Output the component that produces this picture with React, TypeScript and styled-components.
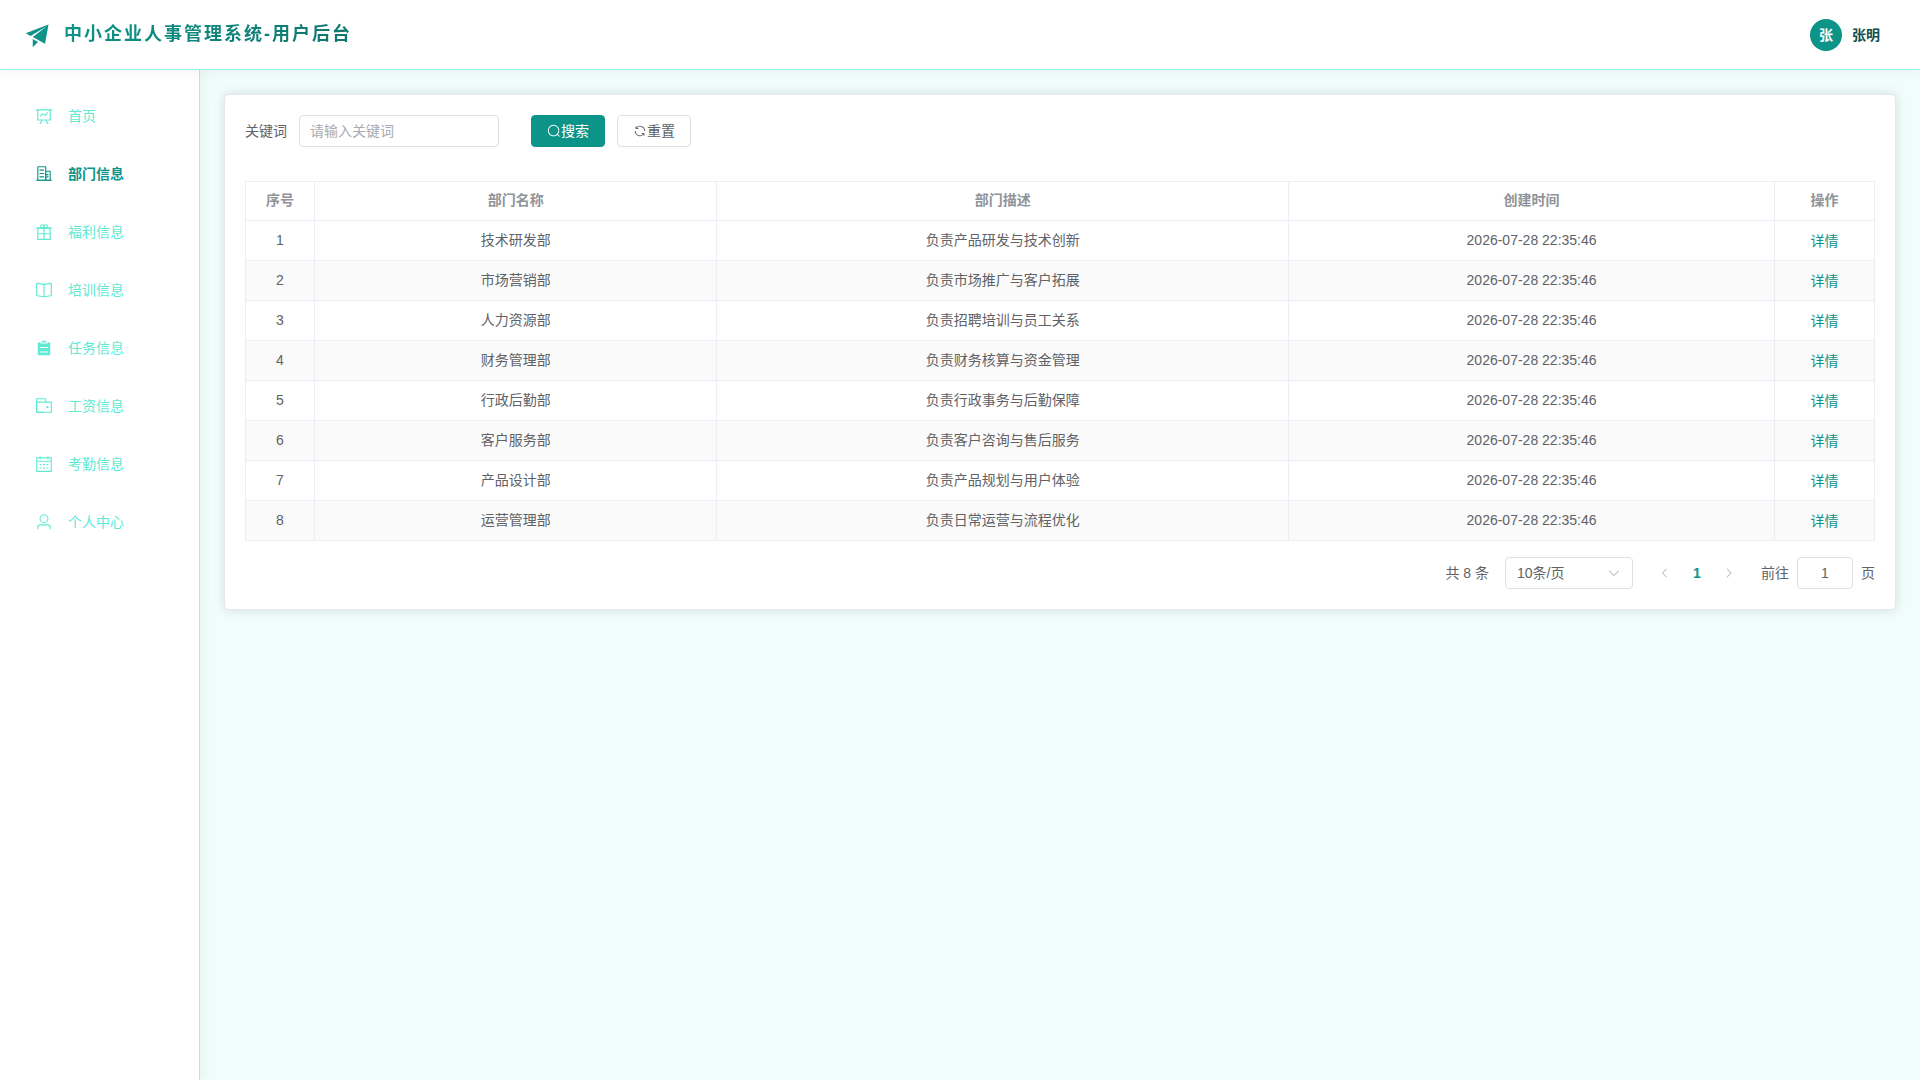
import React, { useState } from 'react';
import styled, { createGlobalStyle } from 'styled-components';

const color = {
  primary: '#0d9488',
  primaryLight: '#5eead4',
  line: '#99f6e4',
  page: '#f0fdfa',
  dark: '#134e4a',
  text: '#606266',
  muted: '#909399',
  placeholder: '#a8abb2',
  control: '#dcdfe6',
  cell: '#ebeef5',
  card: '#e4e7ed',
};

const GlobalStyle = createGlobalStyle`
  *, *::before, *::after { box-sizing: border-box; }
  body { margin: 0; background: ${color.page}; }
  body, button, input, select {
    font-family: "Liberation Sans", "Noto Sans CJK SC", sans-serif;
    font-size: 14px;
    line-height: 22px;
  }
`;

const icons: Record<string, string[]> = {
  promotion: ['m64 448 832-320-128 704-446.08-243.328L832 192 242.816 545.536zm256 512V657.024L512 768z'],
  dataLine: [
    'M359.168 768H160a32 32 0 0 1-32-32V192H64a32 32 0 0 1 0-64h896a32 32 0 1 1 0 64h-64v544a32 32 0 0 1-32 32H665.216l110.848 192h-73.856L591.36 768H433.024L322.176 960H248.32zM832 192H192v512h640zM342.656 534.656a32 32 0 1 1-45.312-45.312L444.992 341.76l125.44 94.08L679.04 300.032a32 32 0 1 1 49.92 39.936L581.632 524.224 451.008 426.24 342.656 534.592z',
  ],
  office: [
    'M192 128v704h384V128zm-32-64h448a32 32 0 0 1 32 32v768a32 32 0 0 1-32 32H160a32 32 0 0 1-32-32V96a32 32 0 0 1 32-32',
    'M256 256h256v64H256zm0 192h256v64H256zm0 192h256v64H256zm384-128h128v64H640zm0 128h128v64H640zM64 832h896v64H64z',
    'M640 384v448h192V384zm-32-64h256a32 32 0 0 1 32 32v512a32 32 0 0 1-32 32H608a32 32 0 0 1-32-32V352a32 32 0 0 1 32-32',
  ],
  present: [
    'M480 896V640H192v-64h288V320H192v576zm64 0h288V320H544v256h288v64H544zM128 256h768v672a32 32 0 0 1-32 32H160a32 32 0 0 1-32-32z',
    'M96 256h832q32 0 32 32t-32 32H96q-32 0-32-32t32-32',
    'M416 256a64 64 0 1 0 0-128 64 64 0 0 0 0 128m0 64a128 128 0 1 1 0-256 128 128 0 0 1 0 256',
    'M608 256a64 64 0 1 0 0-128 64 64 0 0 0 0 128m0 64a128 128 0 1 1 0-256 128 128 0 0 1 0 256',
  ],
  reading: [
    'm512 863.36 384-54.848v-638.72L525.568 222.72a96 96 0 0 1-27.136 0L128 169.792v638.72zM137.024 106.432l370.432 52.928a32 32 0 0 0 9.088 0l370.432-52.928A64 64 0 0 1 960 169.792v638.72a64 64 0 0 1-54.976 63.36l-388.48 55.488a32 32 0 0 1-9.088 0l-388.48-55.488A64 64 0 0 1 64 808.512v-638.72a64 64 0 0 1 73.024-63.36',
    'M480 192h64v704h-64z',
  ],
  list: ['M704 192h160v736H160V192h160v64h384zM288 512h448v-64H288zm0 256h448v-64H288zm96-576V96h256v96z'],
  wallet: [
    'M640 288h-64V128H128v704h384v32a32 32 0 0 0 32 32H96a32 32 0 0 1-32-32V96a32 32 0 0 1 32-32h512a32 32 0 0 1 32 32z',
    'M128 320v512h768V320zm-32-64h832a32 32 0 0 1 32 32v576a32 32 0 0 1-32 32H96a32 32 0 0 1-32-32V288a32 32 0 0 1 32-32',
    'M704 640a64 64 0 1 1 0-128 64 64 0 0 1 0 128',
  ],
  calendar: [
    'M128 384v512h768V192H768v32a32 32 0 1 1-64 0v-32H320v32a32 32 0 0 1-64 0v-32H128v128h768v64zm192-256h384V96a32 32 0 1 1 64 0v32h160a32 32 0 0 1 32 32v768a32 32 0 0 1-32 32H96a32 32 0 0 1-32-32V160a32 32 0 0 1 32-32h160V96a32 32 0 0 1 64 0zm-32 384h64a32 32 0 0 1 0 64h-64a32 32 0 0 1 0-64m0 192h64a32 32 0 1 1 0 64h-64a32 32 0 1 1 0-64m192-192h64a32 32 0 0 1 0 64h-64a32 32 0 0 1 0-64m0 192h64a32 32 0 1 1 0 64h-64a32 32 0 1 1 0-64m192-192h64a32 32 0 1 1 0 64h-64a32 32 0 1 1 0-64m0 192h64a32 32 0 1 1 0 64h-64a32 32 0 1 1 0-64',
  ],
  user: [
    'M512 512a192 192 0 1 0 0-384 192 192 0 0 0 0 384m0 64a256 256 0 1 1 0-512 256 256 0 0 1 0 512m320 320v-96a96 96 0 0 0-96-96H288a96 96 0 0 0-96 96v96a32 32 0 1 1-64 0v-96a160 160 0 0 1 160-160h448a160 160 0 0 1 160 160v96a32 32 0 1 1-64 0',
  ],
  search: [
    'm795.904 750.72 124.992 124.928a32 32 0 0 1-45.248 45.248L750.656 795.904a416 416 0 1 1 45.248-45.248zM480 832a352 352 0 1 0 0-704 352 352 0 0 0 0 704',
  ],
  refresh: [
    'M771.776 794.88A384 384 0 0 1 128 512h64a320 320 0 0 0 555.712 216.448H654.72a32 32 0 1 1 0-64h149.056a32 32 0 0 1 32 32v148.928a32 32 0 1 1-64 0v-50.56zM276.288 295.616h92.992a32 32 0 0 1 0 64H220.16a32 32 0 0 1-32-32V178.56a32 32 0 0 1 64 0v50.56A384 384 0 0 1 896.128 512h-64a320 320 0 0 0-555.776-216.384z',
  ],
  down: [
    'M831.872 340.864 512 652.672 192.128 340.864a30.59 30.59 0 0 0-42.752 0 29.12 29.12 0 0 0 0 41.6L489.664 714.24a32 32 0 0 0 44.672 0l340.288-331.712a29.12 29.12 0 0 0 0-41.728 30.59 30.59 0 0 0-42.752 0z',
  ],
  left: [
    'M609.408 149.376 277.76 489.6a32 32 0 0 0 0 44.672l331.648 340.352a29.12 29.12 0 0 0 41.728 0 30.59 30.59 0 0 0 0-42.752L339.264 511.936l311.872-319.872a30.59 30.59 0 0 0 0-42.688 29.12 29.12 0 0 0-41.728 0',
  ],
  right: [
    'M340.864 149.312a30.59 30.59 0 0 0 0 42.752L652.736 512 340.864 831.872a30.59 30.59 0 0 0 0 42.752 29.12 29.12 0 0 0 41.728 0L714.24 534.336a32 32 0 0 0 0-44.672L382.592 149.376a29.12 29.12 0 0 0-41.728 0z',
  ],
};

const Svg = styled.svg<{ $size: number }>`
  display: block;
  flex: none;
  width: ${(p) => p.$size}px;
  height: ${(p) => p.$size}px;
  fill: currentColor;
`;

const Icon = ({ name, size }: { name: string; size: number }) => (
  <Svg $size={size} viewBox="0 0 1024 1024" aria-hidden="true">
    {icons[name].map((d, i) => (
      <path key={i} d={d} />
    ))}
  </Svg>
);

const Page = styled.div`
  display: flex;
  flex-direction: column;
  min-height: 100vh;
  color: ${color.text};
`;

const Header = styled.header`
  position: relative;
  z-index: 1;
  display: flex;
  align-items: center;
  justify-content: space-between;
  height: 70px;
  padding: 0 40px 0 24px;
  background: #fff;
  border-bottom: 1px solid ${color.line};
  box-shadow: 0 2px 12px rgba(0, 0, 0, 0.05);
`;

const Brand = styled.div`
  display: flex;
  align-items: center;
  gap: 12px;
  color: ${color.primary};
`;

const Title = styled.h1`
  margin: 0;
  font-size: 18px;
  font-weight: 600;
  line-height: 25px;
  letter-spacing: 2px;
  background: linear-gradient(135deg, #0d9488, #0f766e);
  background-clip: text;
  -webkit-background-clip: text;
  color: transparent;
`;

const Account = styled.div`
  display: flex;
  align-items: center;
  gap: 10px;
  font-weight: 600;
  color: ${color.dark};
`;

const Avatar = styled.span`
  display: grid;
  place-items: center;
  width: 32px;
  height: 32px;
  border-radius: 50%;
  background: ${color.primary};
  color: #fff;
`;

const Body = styled.div`
  display: flex;
  flex: 1;
`;

const Sidebar = styled.nav`
  display: flex;
  flex-direction: column;
  flex: none;
  gap: 8px;
  width: 200px;
  padding: 21px 12px;
  background: #fff;
  border-right: 1px solid ${color.line};
  box-shadow: 2px 0 12px rgba(0, 0, 0, 0.05);
`;

const NavLink = styled.a<{ $active: boolean }>`
  display: flex;
  align-items: center;
  gap: 12px;
  height: 50px;
  padding: 0 20px;
  text-decoration: none;
  color: ${(p) => (p.$active ? color.primary : color.primaryLight)};
  font-weight: ${(p) => (p.$active ? 600 : 400)};
`;

const NavIcon = styled.span`
  display: grid;
  place-items: center;
  width: 24px;
`;

const Main = styled.main`
  flex: 1;
  min-width: 0;
  padding: 24px;
`;

const Card = styled.section`
  padding: 20px;
  background: #fff;
  border: 1px solid ${color.card};
  border-radius: 4px;
  box-shadow: 0 0 12px rgba(0, 0, 0, 0.12);
`;

const SearchForm = styled.form`
  display: flex;
  align-items: center;
  gap: 32px;
  margin-bottom: 34px;
`;

const Field = styled.div`
  display: flex;
  align-items: center;
  gap: 12px;
`;

const TextInput = styled.input<{ $width: number; $center?: boolean }>`
  width: ${(p) => p.$width}px;
  height: 32px;
  padding: 0 10px;
  border: 1px solid ${color.control};
  border-radius: 4px;
  background: #fff;
  color: ${color.text};
  text-align: ${(p) => (p.$center ? 'center' : 'left')};
  outline: none;
  &::placeholder { color: ${color.placeholder}; }
  &:focus { border-color: ${color.primary}; }
`;

const Button = styled.button<{ $primary?: boolean }>`
  display: flex;
  align-items: center;
  height: 32px;
  padding: 0 15px;
  border: 1px solid ${(p) => (p.$primary ? color.primary : color.control)};
  border-radius: 4px;
  background: ${(p) => (p.$primary ? color.primary : '#fff')};
  color: ${(p) => (p.$primary ? '#fff' : color.text)};
  cursor: pointer;
`;

const Table = styled.table`
  width: 100%;
  table-layout: fixed;
  border-collapse: separate;
  border-spacing: 0;
  border: 1px solid ${color.cell};
  border-width: 1px 0 0 1px;
  text-align: center;
`;

const Col = styled.col<{ $width?: string }>`
  width: ${(p) => p.$width ?? 'auto'};
`;

const HeadCell = styled.th`
  height: 39px;
  padding: 0 12px 2px;
  border: 1px solid ${color.cell};
  border-width: 0 1px 1px 0;
  color: ${color.muted};
  font-weight: 600;
`;

const Row = styled.tr`
  &:nth-child(even) { background: #fafafa; }
`;

const Cell = styled.td`
  height: 40px;
  padding: 0 12px 2px;
  border: 1px solid ${color.cell};
  border-width: 0 1px 1px 0;
`;

const LinkButton = styled.button`
  padding: 2px 0 0;
  border: 0;
  background: none;
  color: ${color.primary};
  cursor: pointer;
`;

const Pagination = styled.div`
  display: flex;
  align-items: center;
  justify-content: flex-end;
  gap: 16px;
  margin-top: 16px;
`;

const SelectBox = styled.div`
  position: relative;
  width: 128px;
`;

const Select = styled.select`
  appearance: none;
  display: block;
  width: 100%;
  height: 32px;
  padding: 0 32px 0 11px;
  border: 1px solid ${color.control};
  border-radius: 4px;
  background: #fff;
  color: ${color.text};
  outline: none;
`;

const SelectArrow = styled.span`
  position: absolute;
  top: 9px;
  right: 12px;
  color: ${color.placeholder};
  pointer-events: none;
`;

const Pager = styled.div`
  display: flex;
`;

const PageButton = styled.button<{ $current?: boolean }>`
  display: grid;
  place-items: center;
  width: 32px;
  height: 32px;
  padding: 0;
  border: 0;
  background: none;
  color: ${(p) => (p.$current ? color.primary : color.placeholder)};
  font-weight: 700;
`;

const Jump = styled.label`
  display: flex;
  align-items: center;
  gap: 8px;
`;

const menu = [
  { icon: 'dataLine', label: '首页' },
  { icon: 'office', label: '部门信息' },
  { icon: 'present', label: '福利信息' },
  { icon: 'reading', label: '培训信息' },
  { icon: 'list', label: '任务信息' },
  { icon: 'wallet', label: '工资信息' },
  { icon: 'calendar', label: '考勤信息' },
  { icon: 'user', label: '个人中心' },
];

const departments = [
  ['技术研发部', '负责产品研发与技术创新'],
  ['市场营销部', '负责市场推广与客户拓展'],
  ['人力资源部', '负责招聘培训与员工关系'],
  ['财务管理部', '负责财务核算与资金管理'],
  ['行政后勤部', '负责行政事务与后勤保障'],
  ['客户服务部', '负责客户咨询与售后服务'],
  ['产品设计部', '负责产品规划与用户体验'],
  ['运营管理部', '负责日常运营与流程优化'],
];

export default function App() {
  const [keyword, setKeyword] = useState('');
  const [active, setActive] = useState('部门信息');
  const [page, setPage] = useState('1');

  return (
    <Page lang="zh-CN">
      <GlobalStyle />
      <Header>
        <Brand>
          <Icon name="promotion" size={28} />
          <Title>中小企业人事管理系统-用户后台</Title>
        </Brand>
        <Account>
          <Avatar>张</Avatar>
          <span>张明</span>
        </Account>
      </Header>
      <Body>
        <Sidebar>
          {menu.map((m) => (
            <NavLink key={m.label} href="#" $active={m.label === active} onClick={() => setActive(m.label)}>
              <NavIcon>
                <Icon name={m.icon} size={18} />
              </NavIcon>
              {m.label}
            </NavLink>
          ))}
        </Sidebar>
        <Main>
          <Card>
            <SearchForm onSubmit={(e) => e.preventDefault()}>
              <Field>
                <label htmlFor="keyword">关键词</label>
                <TextInput
                  id="keyword"
                  $width={200}
                  placeholder="请输入关键词"
                  value={keyword}
                  onChange={(e) => setKeyword(e.target.value)}
                />
              </Field>
              <Field>
                <Button type="submit" $primary>
                  <Icon name="search" size={14} />
                  搜索
                </Button>
                <Button type="button" onClick={() => setKeyword('')}>
                  <Icon name="refresh" size={14} />
                  重置
                </Button>
              </Field>
            </SearchForm>
            <Table>
              <colgroup>
                <Col $width="69px" />
                <Col $width="24.7%" />
                <Col $width="35.1%" />
                <Col />
                <Col $width="100px" />
              </colgroup>
              <thead>
                <tr>
                  {['序号', '部门名称', '部门描述', '创建时间', '操作'].map((h) => (
                    <HeadCell key={h} scope="col">{h}</HeadCell>
                  ))}
                </tr>
              </thead>
              <tbody>
                {departments.map(([name, description], i) => (
                  <Row key={name}>
                    <Cell>{i + 1}</Cell>
                    <Cell>{name}</Cell>
                    <Cell>{description}</Cell>
                    <Cell>2026-07-28 22:35:46</Cell>
                    <Cell>
                      <LinkButton type="button">详情</LinkButton>
                    </Cell>
                  </Row>
                ))}
              </tbody>
            </Table>
            <Pagination>
              <span>共 8 条</span>
              <SelectBox>
                <Select aria-label="每页条数" defaultValue="10">
                  <option value="10">10条/页</option>
                  <option value="20">20条/页</option>
                  <option value="50">50条/页</option>
                </Select>
                <SelectArrow>
                  <Icon name="down" size={14} />
                </SelectArrow>
              </SelectBox>
              <Pager>
                <PageButton type="button" aria-label="上一页" disabled>
                  <Icon name="left" size={12} />
                </PageButton>
                <PageButton type="button" $current>1</PageButton>
                <PageButton type="button" aria-label="下一页" disabled>
                  <Icon name="right" size={12} />
                </PageButton>
              </Pager>
              <Jump>
                前往
                <TextInput $width={56} $center value={page} onChange={(e) => setPage(e.target.value)} />
                页
              </Jump>
            </Pagination>
          </Card>
        </Main>
      </Body>
    </Page>
  );
}
